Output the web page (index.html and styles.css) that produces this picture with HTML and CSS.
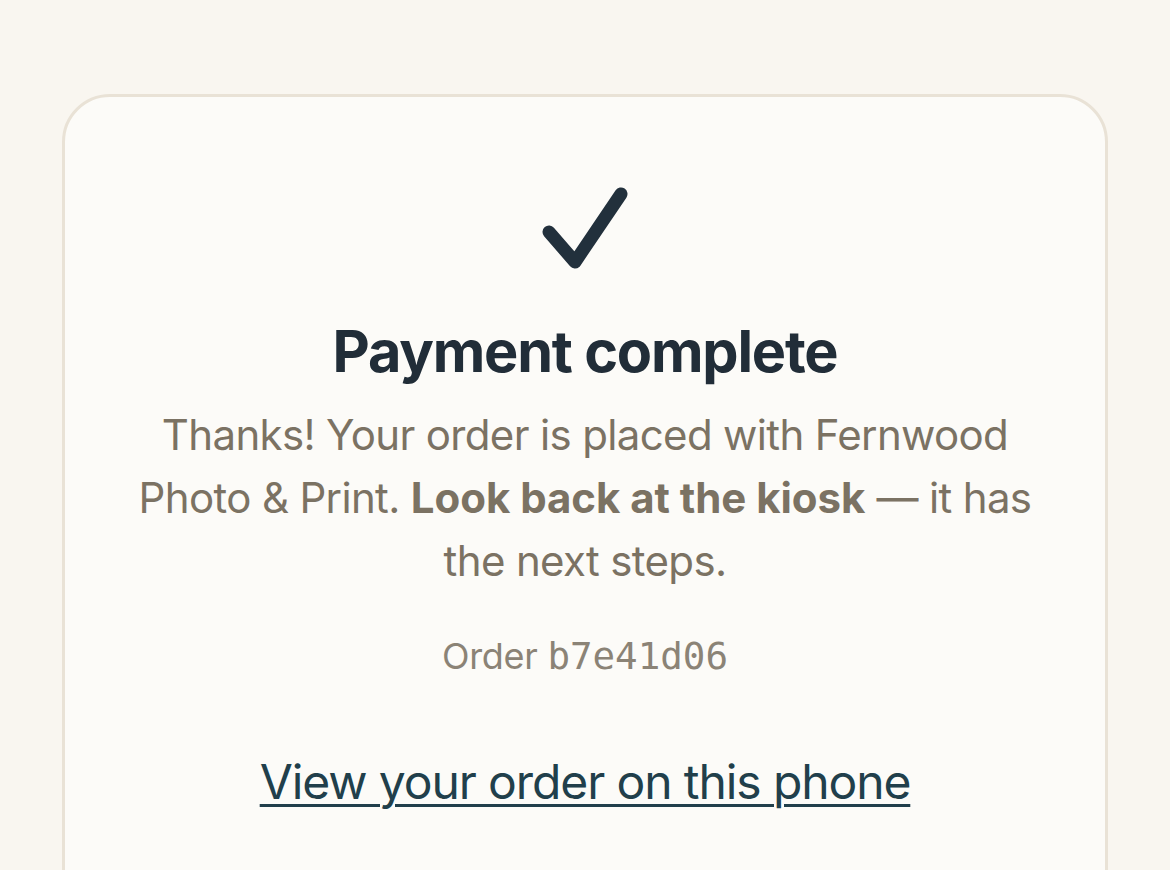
FILE: index.html
```html
<!DOCTYPE html>
<html lang="en">
<head>
<meta charset="utf-8">
<title>Payment complete</title>
<link rel="stylesheet" href="styles.css">
</head>
<body>
<main class="page">
  <section class="card">
    <div class="check" aria-hidden="true">
      <svg width="100" height="100" viewBox="0 0 100 100">
        <path d="M14 45 L40 75 L86 7" fill="none" stroke="#22303c" stroke-width="13" stroke-linecap="round" stroke-linejoin="round"/>
      </svg>
    </div>
    <h1 class="title">Payment complete</h1>
    <p class="lead">Thanks! Your order is placed with Fernwood Photo &amp; Print. <strong>Look back at the kiosk</strong> — it has the next steps.</p>
    <p class="order">Order <code class="hash">b7e41d06</code></p>
    <a class="link" href="#">View your order on this phone</a>
  </section>
</main>
</body>
</html>
```
FILE: styles.css
```css
html, body {
  margin: 0;
  padding: 0;
  background: #f9f6f0;
}
body {
  font-family: Inter, "Noto Sans", sans-serif;
}
.page {
  padding: 94px 62px 0;
}
.card {
  background: #fcfbf8;
  border: 3px solid #e9e2d6;
  border-radius: 48px;
  padding: 90px 60px 120px;
  display: flex;
  flex-direction: column;
  align-items: center;
  text-align: center;
  min-height: 900px;
  box-sizing: border-box;
}
.check {
  width: 100px;
  height: 100px;
  display: flex;
}
.title {
  margin: 29px 0 0;
  font-size: 57.6px;
  font-weight: 700;
  line-height: 1.25;
  letter-spacing: -1.2px;
  color: #212d38;
}
.lead {
  margin: 15px 0 0;
  font-size: 42px;
  line-height: 63px;
  letter-spacing: -0.65px;
  color: #7b7263;
}
.lead strong {
  font-weight: 700;
  letter-spacing: -0.05px;
}
.order {
  margin: 37px 0 0;
  font-size: 36px;
  line-height: 54px;
  letter-spacing: -0.3px;
  color: #8b8376;
}
.hash {
  font-family: "DejaVu Sans Mono", monospace;
  font-size: 37.5px;
  letter-spacing: 0;
}
.link {
  margin-top: 69px;
  font-size: 48px;
  line-height: 60px;
  letter-spacing: -1.1px;
  color: #213f4b;
  text-decoration: underline;
  text-underline-offset: 5px;
  text-decoration-thickness: 3px;
}
```
